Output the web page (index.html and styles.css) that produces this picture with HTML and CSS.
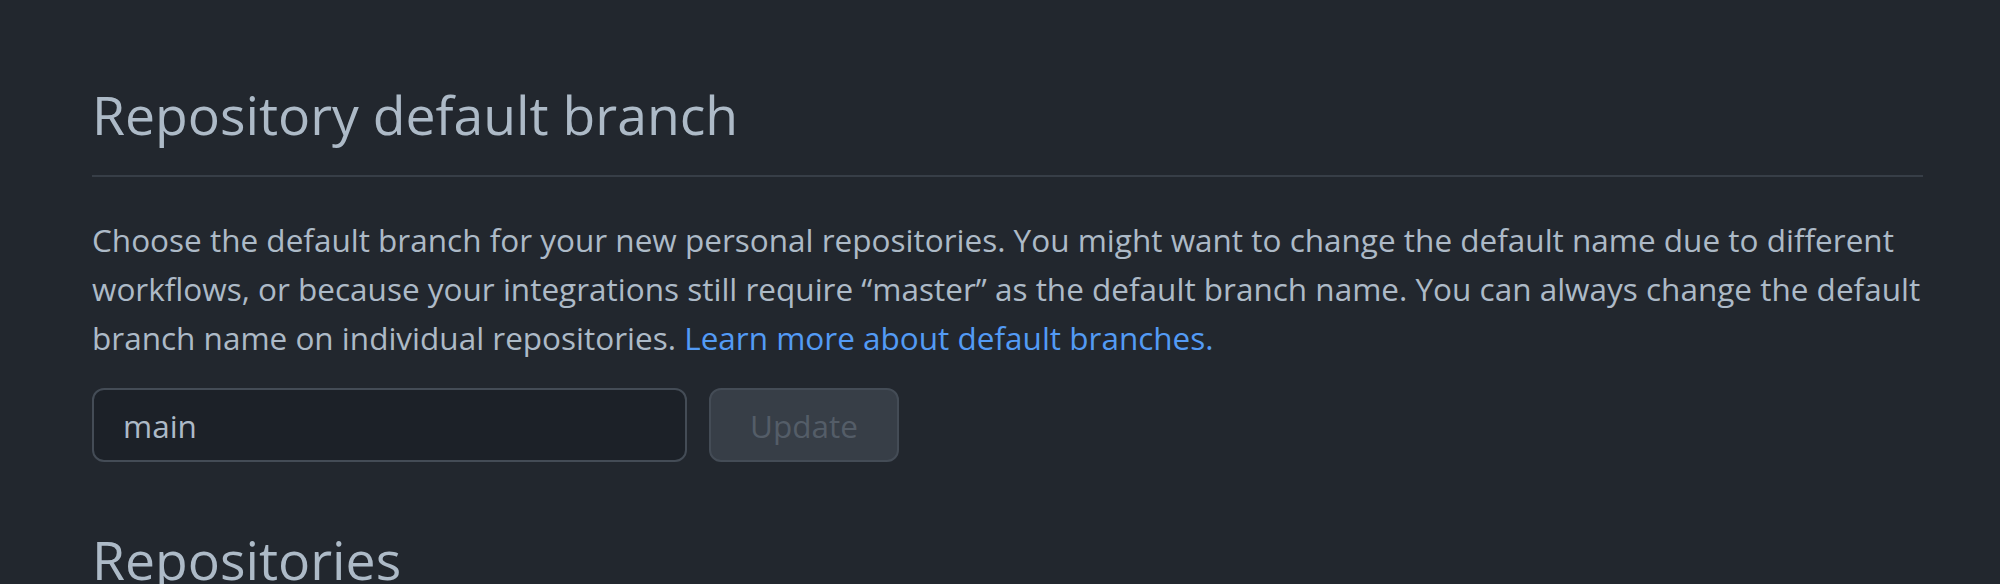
FILE: index.html
```html
<!DOCTYPE html>
<html lang="en">
<head>
  <meta charset="UTF-8">
  <meta name="viewport" content="width=device-width, initial-scale=1.0">
  <title>Repository default branch</title>
  <link rel="stylesheet" href="styles.css">
</head>
<body>
  <div class="settings">
    <div class="subhead">
      <h2 class="subhead-heading">Repository default branch</h2>
    </div>
    <p class="note">
      Choose the default branch for your new personal repositories. You might want to change the default name due to different workflows, or because your integrations still require “master” as the default branch name. You can always change the default branch name on individual repositories. <a href="#">Learn more about default branches.</a>
    </p>
    <form class="branch-form" action="#">
      <input class="form-control" type="text" name="default_branch" value="main">
      <button class="btn" type="submit" disabled>Update</button>
    </form>
    <div class="subhead subhead-next">
      <h2 class="subhead-heading">Repositories</h2>
    </div>
  </div>
</body>
</html>
```

FILE: styles.css
```css
/* dark dimmed settings page */
body {
  margin: 0;
  background-color: #22272e;
  color: #adbac7;
  font-family: "Open Sans", "Noto Sans", sans-serif;
  font-size: 31.5px;
  line-height: 49px;
}

.settings {
  padding: 83px 77px 0 92px;
}

.subhead {
  padding-bottom: 28px;
  border-bottom: 2px solid #373e47;
}

.subhead-heading {
  margin: 0;
  font-size: 53.5px;
  line-height: 64px;
  font-weight: 400;
}

.subhead-next {
  margin-top: 66px;
  border-bottom: none;
}

/* a little extra room so the second line keeps "default" */
.note {
  margin: 38px -12px 26px 0;
}

.note a {
  color: #539bf5;
  text-decoration: none;
}

/* input and button row */
.branch-form {
  display: flex;
  gap: 22px;
}

.form-control {
  width: 595px;
  height: 74px;
  box-sizing: border-box;
  padding: 0 29px;
  border: 2px solid #444c56;
  border-radius: 12px;
  background-color: #1c2128;
  color: #adbac7;
  font-family: inherit;
  font-size: 31.5px;
}

.btn {
  width: 190px;
  height: 74px;
  border: 2px solid #444c56;
  border-radius: 12px;
  background-color: #373e47;
  color: #545d68;
  font-family: inherit;
  font-size: 31.5px;
}
```
